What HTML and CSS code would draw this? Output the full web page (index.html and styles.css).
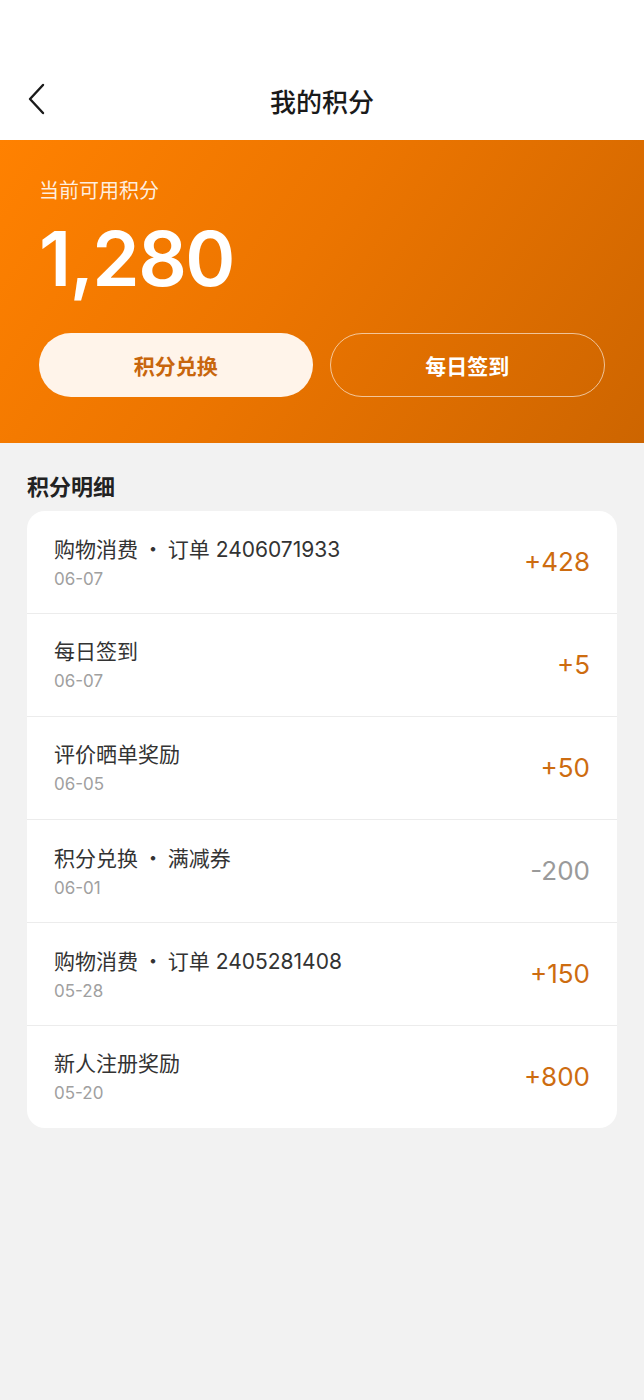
FILE: index.html
```html
<!DOCTYPE html>
<html lang="zh-CN">
<head>
<meta charset="utf-8">
<title>我的积分</title>
<link rel="stylesheet" href="styles.css">
</head>
<body>
<div class="page">
  <header class="header">
    <div class="nav">
      <span class="back" aria-label="返回">
        <svg width="20" height="32" viewBox="0 0 20 32"><path d="M16 2 L3 16 L16 30" fill="none" stroke="#1a1a1a" stroke-width="2.4" stroke-linecap="round" stroke-linejoin="round"/></svg>
      </span>
      <h1 class="title">我的积分</h1>
    </div>
  </header>

  <section class="banner">
    <div class="label">当前可用积分</div>
    <div class="points">1,280</div>
    <div class="actions">
      <button class="btn btn-solid">积分兑换</button>
      <button class="btn btn-outline">每日签到</button>
    </div>
  </section>

  <h2 class="section-title">积分明细</h2>
  <ul class="list">
    <li class="row">
      <div class="info"><div class="name">购物消费 <span class="sep">·</span> 订单 2406071933</div><div class="date">06-07</div></div>
      <div class="amount">+428</div>
    </li>
    <li class="row">
      <div class="info"><div class="name">每日签到</div><div class="date">06-07</div></div>
      <div class="amount">+5</div>
    </li>
    <li class="row">
      <div class="info"><div class="name">评价晒单奖励</div><div class="date">06-05</div></div>
      <div class="amount">+50</div>
    </li>
    <li class="row">
      <div class="info"><div class="name">积分兑换 <span class="sep">·</span> 满减券</div><div class="date">06-01</div></div>
      <div class="amount minus">-200</div>
    </li>
    <li class="row">
      <div class="info"><div class="name">购物消费 <span class="sep">·</span> 订单 2405281408</div><div class="date">05-28</div></div>
      <div class="amount">+150</div>
    </li>
    <li class="row">
      <div class="info"><div class="name">新人注册奖励</div><div class="date">05-20</div></div>
      <div class="amount">+800</div>
    </li>
  </ul>
</div>
</body>
</html>
```

FILE: styles.css
```css
* { box-sizing: border-box; }
html, body { margin: 0; padding: 0; }
body {
  background: #f2f2f2;
  font-family: Inter, "Noto Sans CJK SC", sans-serif;
  color: #222;
}
.page { min-height: 1400px; background: #f2f2f2; }

.header {
  background: #fff;
  height: 140px;
  padding-top: 60px;
}
.nav {
  height: 80px;
  display: flex;
  align-items: center;
  justify-content: center;
  position: relative;
}
.back {
  position: absolute;
  left: 27px;
  top: 23px;
  width: 20px;
  height: 32px;
  display: flex;
}
.title {
  margin: 0;
  font-size: 26px;
  font-weight: 500;
  color: #1a1a1a;
  line-height: 36px;
  padding-top: 6px;
}

.banner {
  background: linear-gradient(125deg, #ff8100 0%, #ec7500 45%, #cd6500 100%);
  padding: 38px 39px 45px;
  height: 303px;
}
.label {
  font-size: 20px;
  line-height: 26px;
  color: rgba(255, 255, 255, 0.88);
}
.points {
  margin-top: 14px;
  font-size: 76px;
  font-weight: 600;
  line-height: 80px;
  color: #fff;
  letter-spacing: -1.5px;
}
.actions {
  margin-top: 35px;
  display: flex;
  gap: 17px;
}
.btn {
  flex: 1;
  height: 64px;
  border-radius: 32px;
  font-family: Inter, "Noto Sans CJK SC", sans-serif;
  font-size: 21px;
  font-weight: 700;
  cursor: pointer;
}
.btn-solid {
  background: #fff4ea;
  color: #c8660d;
  border: none;
}
.btn-outline {
  background: transparent;
  color: #fff;
  border: 1.5px solid rgba(255, 255, 255, 0.6);
}

.section-title {
  margin: 29px 27px 9px;
  font-size: 22px;
  font-weight: 700;
  line-height: 30px;
  color: #222;
}

.list {
  list-style: none;
  margin: 0 27px;
  padding: 0;
  background: #fff;
  border-radius: 18px;
  overflow: hidden;
}
.row {
  height: 103px;
  padding: 0 27px;
  display: flex;
  align-items: center;
  justify-content: space-between;
  border-bottom: 1px solid #ececec;
}
.row:last-child { border-bottom: none; height: 102px; }
.name {
  font-size: 21px;
  line-height: 28px;
  color: #333;
}
.sep { font-family: "Noto Sans CJK SC", sans-serif; margin: 0 -1.5px; }
.date {
  margin-top: 3px;
  font-size: 17px;
  line-height: 24px;
  color: #a0a0a0;
}
.amount {
  font-size: 26px;
  line-height: 34px;
  color: #cd6c10;
}
.amount.minus { color: #9a9a9a; }
```
